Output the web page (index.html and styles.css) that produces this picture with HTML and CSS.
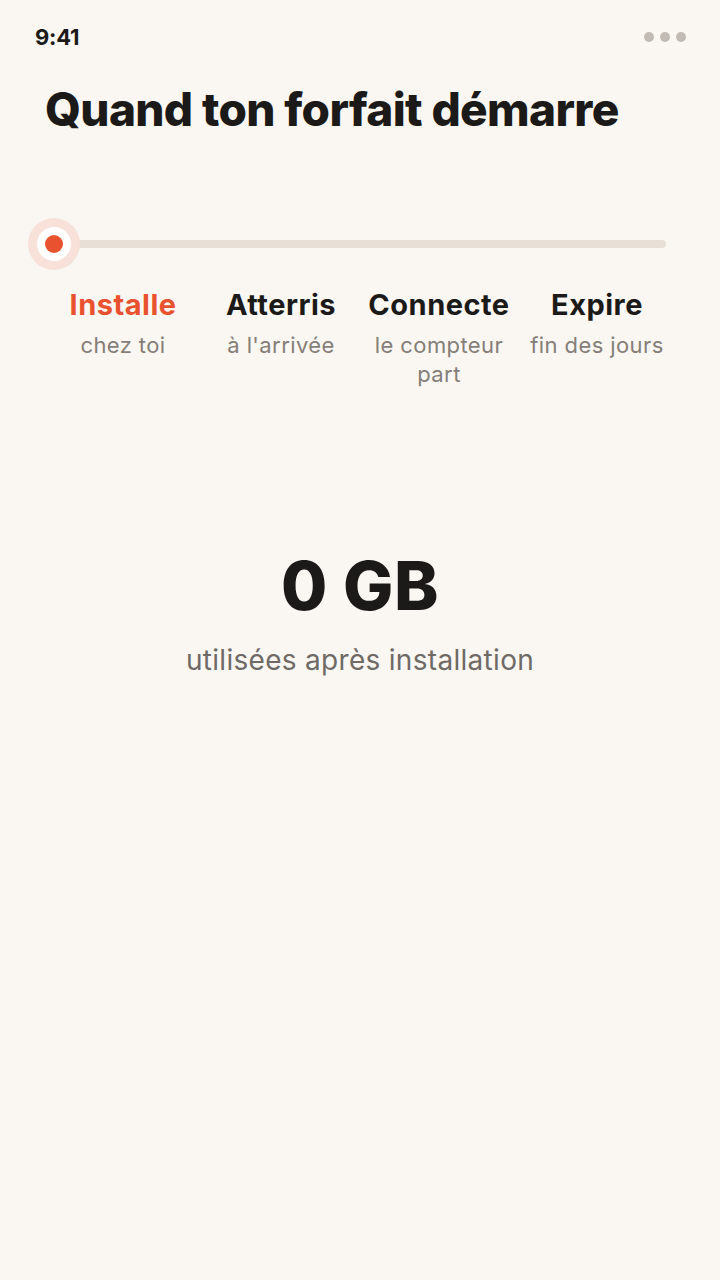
FILE: index.html
```html
<!DOCTYPE html>
<html lang="fr">
<head>
<meta charset="utf-8">
<link rel="stylesheet" href="styles.css">
</head>
<body>
<div class="screen">
  <div class="status">
    <span class="time">9:41</span>
    <span class="dots"><i></i><i></i><i></i></span>
  </div>
  <h1 class="title">Quand ton forfait démarre</h1>
  <div class="slider">
    <div class="track"></div>
    <div class="knob"><div class="ring"><div class="dot"></div></div></div>
  </div>
  <div class="steps">
    <div class="step active"><div class="step-title">Installe</div><div class="step-sub">chez toi</div></div>
    <div class="step"><div class="step-title">Atterris</div><div class="step-sub">à l'arrivée</div></div>
    <div class="step"><div class="step-title">Connecte</div><div class="step-sub">le compteur part</div></div>
    <div class="step"><div class="step-title">Expire</div><div class="step-sub">fin des jours</div></div>
  </div>
  <div class="usage">
    <div class="amount">0 GB</div>
    <div class="usage-sub">utilisées après installation</div>
  </div>
</div>
</body>
</html>
```
FILE: styles.css
```css
* { box-sizing: border-box; }
html, body { margin: 0; padding: 0; }
body {
  background: #faf7f2;
  font-family: Inter, "Noto Sans", sans-serif;
  color: #1c1a19;
}
.screen {
  width: 720px;
  height: 1280px;
  display: flex;
  flex-direction: column;
}
.status {
  display: flex;
  justify-content: space-between;
  align-items: center;
  padding: 24px 34px 0 35px;
  height: 50px;
}
.time {
  font-weight: 700;
  font-size: 22px;
  letter-spacing: -0.2px;
}
.dots { display: flex; gap: 6px; }
.dots i {
  width: 10px; height: 10px; border-radius: 50%;
  background: #c2bbb5;
  display: block;
}
.title {
  margin: 32px 0 0 45px;
  font-size: 46px;
  font-weight: 800;
  letter-spacing: -0.65px;
  line-height: 54px;
}
.slider {
  position: relative;
  margin: 82px 54px 0 28px;
  height: 52px;
  display: flex;
  align-items: center;
}
.track {
  flex: 1;
  height: 8px;
  margin-left: 26px;
  background: #e8dfd7;
  border-radius: 4px;
}
.knob {
  position: absolute;
  left: 0; top: 0;
  width: 52px; height: 52px;
  border-radius: 50%;
  background: #f7e1d9;
  display: flex; align-items: center; justify-content: center;
}
.ring {
  width: 34px; height: 34px; border-radius: 50%;
  background: #ffffff;
  display: flex; align-items: center; justify-content: center;
}
.dot {
  width: 18px; height: 18px; border-radius: 50%;
  background: #e9522f;
}
.steps {
  display: grid;
  grid-template-columns: repeat(4, 158px);
  margin: 17px 0 0 44px;
  text-align: center;
}
.step-title {
  font-weight: 700;
  font-size: 29px;
  letter-spacing: 0.5px;
  line-height: 36px;
  color: #1c1a19;
}
.step.active .step-title { color: #e9522f; }
.step-sub {
  margin-top: 8px;
  font-size: 22px;
  letter-spacing: 0.4px;
  line-height: 29px;
  color: #857e78;
  padding: 0 6px;
}
.usage {
  margin-top: 157px;
  text-align: center;
}
.amount {
  font-weight: 800;
  font-size: 67px;
  line-height: 80px;
  letter-spacing: 0.5px;
}
.usage-sub {
  margin-top: 17px;
  font-size: 28px;
  letter-spacing: 0.3px;
  color: #6f6a66;
}
```
